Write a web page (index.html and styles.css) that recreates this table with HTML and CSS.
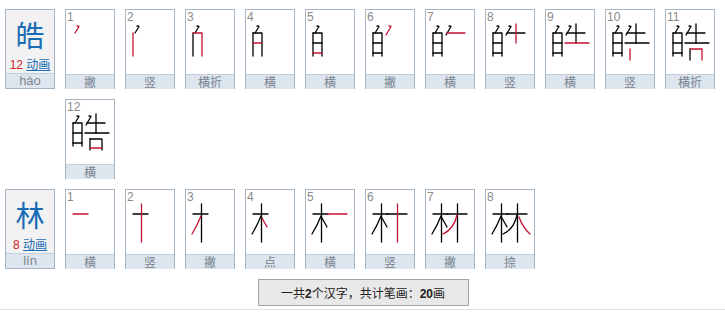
FILE: index.html
```html
<!DOCTYPE html>
<html lang="zh">
<head>
<meta charset="utf-8">
<link rel="stylesheet" href="styles.css">
</head>
<body>
<svg class="defs" width="0" height="0" aria-hidden="true">
  <defs>
    <!-- 皓 -->
    <g id="h1"><path d="M12,17 L14,17.5 L10,24"/></g>
    <g id="h2"><path d="M8,24 L8,47"/></g>
    <g id="h3"><path d="M8,24 L17,24 L17,47"/></g>
    <g id="h4"><path d="M8,34 L17,34"/></g>
    <g id="h5"><path d="M8,44 L17,44"/></g>
    <g id="h6"><path d="M24,17 L26,17.5 L21,26"/></g>
    <g id="h7"><path d="M22,24 L40,24"/></g>
    <g id="h8"><path d="M31,15 L31,34"/></g>
    <g id="h9"><path d="M20,34 L44,34"/></g>
    <g id="h10"><path d="M25,40 L25,51"/></g>
    <g id="h11"><path d="M25,40 L37,40 L37,51"/></g>
    <g id="h12"><path d="M25,49 L37,49"/></g>
    <!-- 林 -->
    <g id="l1"><path d="M8,25 L23,25"/></g>
    <g id="l2"><path d="M16.5,15 L16.5,53"/></g>
    <g id="l3"><path d="M16,27 Q12,37 7,45"/></g>
    <g id="l4"><path d="M17,29 L22,38"/></g>
    <g id="l5"><path d="M22,25 L42,25"/></g>
    <g id="l6"><path d="M32.5,15 L32.5,53"/></g>
    <g id="l7"><path d="M32,26 Q29,40 18,45"/></g>
    <g id="l8"><path d="M34,28 Q38,39 45,45"/></g>
  </defs>
</svg>

<div class="page">
  <div class="row">
    <div class="char-card">
      <div class="char-top">
        <div class="big">皓</div>
        <div class="meta"><span class="cnt">12</span> <a class="anim" href="#">动画</a></div>
      </div>
      <div class="label pinyin">hào</div>
    </div>
    <div class="strokes">
      <div class="card"><div class="pic"><span class="num">1</span><svg viewBox="1 1 48 64"><use href="#h1" class="r"/></svg></div><div class="label">撇</div></div>
      <div class="card"><div class="pic"><span class="num">2</span><svg viewBox="1 1 48 64"><use href="#h1" class="k"/><use href="#h2" class="r"/></svg></div><div class="label">竖</div></div>
      <div class="card"><div class="pic"><span class="num">3</span><svg viewBox="1 1 48 64"><use href="#h1" class="k"/><use href="#h2" class="k"/><use href="#h3" class="r"/></svg></div><div class="label">横折</div></div>
      <div class="card"><div class="pic"><span class="num">4</span><svg viewBox="1 1 48 64"><use href="#h1" class="k"/><use href="#h2" class="k"/><use href="#h3" class="k"/><use href="#h4" class="r"/></svg></div><div class="label">横</div></div>
      <div class="card"><div class="pic"><span class="num">5</span><svg viewBox="1 1 48 64"><use href="#h1" class="k"/><use href="#h2" class="k"/><use href="#h3" class="k"/><use href="#h4" class="k"/><use href="#h5" class="r"/></svg></div><div class="label">横</div></div>
      <div class="card"><div class="pic"><span class="num">6</span><svg viewBox="1 1 48 64"><use href="#h1" class="k"/><use href="#h2" class="k"/><use href="#h3" class="k"/><use href="#h4" class="k"/><use href="#h5" class="k"/><use href="#h6" class="r"/></svg></div><div class="label">撇</div></div>
      <div class="card"><div class="pic"><span class="num">7</span><svg viewBox="1 1 48 64"><use href="#h1" class="k"/><use href="#h2" class="k"/><use href="#h3" class="k"/><use href="#h4" class="k"/><use href="#h5" class="k"/><use href="#h6" class="k"/><use href="#h7" class="r"/></svg></div><div class="label">横</div></div>
      <div class="card"><div class="pic"><span class="num">8</span><svg viewBox="1 1 48 64"><use href="#h1" class="k"/><use href="#h2" class="k"/><use href="#h3" class="k"/><use href="#h4" class="k"/><use href="#h5" class="k"/><use href="#h6" class="k"/><use href="#h7" class="k"/><use href="#h8" class="r"/></svg></div><div class="label">竖</div></div>
      <div class="card"><div class="pic"><span class="num">9</span><svg viewBox="1 1 48 64"><use href="#h1" class="k"/><use href="#h2" class="k"/><use href="#h3" class="k"/><use href="#h4" class="k"/><use href="#h5" class="k"/><use href="#h6" class="k"/><use href="#h7" class="k"/><use href="#h8" class="k"/><use href="#h9" class="r"/></svg></div><div class="label">横</div></div>
      <div class="card"><div class="pic"><span class="num">10</span><svg viewBox="1 1 48 64"><use href="#h1" class="k"/><use href="#h2" class="k"/><use href="#h3" class="k"/><use href="#h4" class="k"/><use href="#h5" class="k"/><use href="#h6" class="k"/><use href="#h7" class="k"/><use href="#h8" class="k"/><use href="#h9" class="k"/><use href="#h10" class="r"/></svg></div><div class="label">竖</div></div>
      <div class="card"><div class="pic"><span class="num">11</span><svg viewBox="1 1 48 64"><use href="#h1" class="k"/><use href="#h2" class="k"/><use href="#h3" class="k"/><use href="#h4" class="k"/><use href="#h5" class="k"/><use href="#h6" class="k"/><use href="#h7" class="k"/><use href="#h8" class="k"/><use href="#h9" class="k"/><use href="#h10" class="k"/><use href="#h11" class="r"/></svg></div><div class="label">横折</div></div>
      <div class="card"><div class="pic"><span class="num">12</span><svg viewBox="1 1 48 64"><use href="#h1" class="k"/><use href="#h2" class="k"/><use href="#h3" class="k"/><use href="#h4" class="k"/><use href="#h5" class="k"/><use href="#h6" class="k"/><use href="#h7" class="k"/><use href="#h8" class="k"/><use href="#h9" class="k"/><use href="#h10" class="k"/><use href="#h11" class="k"/><use href="#h12" class="r"/></svg></div><div class="label">横</div></div>
    </div>
  </div>

  <div class="row">
    <div class="char-card">
      <div class="char-top">
        <div class="big">林</div>
        <div class="meta"><span class="cnt">8</span> <a class="anim" href="#">动画</a></div>
      </div>
      <div class="label pinyin">lín</div>
    </div>
    <div class="strokes">
      <div class="card"><div class="pic"><span class="num">1</span><svg viewBox="1 1 48 64"><use href="#l1" class="r"/></svg></div><div class="label">横</div></div>
      <div class="card"><div class="pic"><span class="num">2</span><svg viewBox="1 1 48 64"><use href="#l1" class="k"/><use href="#l2" class="r"/></svg></div><div class="label">竖</div></div>
      <div class="card"><div class="pic"><span class="num">3</span><svg viewBox="1 1 48 64"><use href="#l1" class="k"/><use href="#l2" class="k"/><use href="#l3" class="r"/></svg></div><div class="label">撇</div></div>
      <div class="card"><div class="pic"><span class="num">4</span><svg viewBox="1 1 48 64"><use href="#l1" class="k"/><use href="#l2" class="k"/><use href="#l3" class="k"/><use href="#l4" class="r"/></svg></div><div class="label">点</div></div>
      <div class="card"><div class="pic"><span class="num">5</span><svg viewBox="1 1 48 64"><use href="#l1" class="k"/><use href="#l2" class="k"/><use href="#l3" class="k"/><use href="#l4" class="k"/><use href="#l5" class="r"/></svg></div><div class="label">横</div></div>
      <div class="card"><div class="pic"><span class="num">6</span><svg viewBox="1 1 48 64"><use href="#l1" class="k"/><use href="#l2" class="k"/><use href="#l3" class="k"/><use href="#l4" class="k"/><use href="#l5" class="k"/><use href="#l6" class="r"/></svg></div><div class="label">竖</div></div>
      <div class="card"><div class="pic"><span class="num">7</span><svg viewBox="1 1 48 64"><use href="#l1" class="k"/><use href="#l2" class="k"/><use href="#l3" class="k"/><use href="#l4" class="k"/><use href="#l5" class="k"/><use href="#l6" class="k"/><use href="#l7" class="r"/></svg></div><div class="label">撇</div></div>
      <div class="card"><div class="pic"><span class="num">8</span><svg viewBox="1 1 48 64"><use href="#l1" class="k"/><use href="#l2" class="k"/><use href="#l3" class="k"/><use href="#l4" class="k"/><use href="#l5" class="k"/><use href="#l6" class="k"/><use href="#l7" class="k"/><use href="#l8" class="r"/></svg></div><div class="label">捺</div></div>
    </div>
  </div>

  <div class="summary-wrap">
    <div class="summary">一共<b>2</b>个汉字，共计笔画：<b>20</b>画</div>
  </div>
</div>
<div class="rule"></div>
</body>
</html>
```

FILE: styles.css
```css
html, body {
  margin: 0;
  padding: 0;
  background: #fff;
}
body {
  font-family: "Liberation Sans", "Noto Sans CJK SC", sans-serif;
  font-size: 12px;
  color: #333;
}
.defs {
  position: absolute;
  width: 0;
  height: 0;
}
.page {
  padding: 9px 0 0 5px;
  display: flex;
  flex-direction: column;
  gap: 10px;
}
.row {
  display: flex;
  gap: 10px;
  align-items: flex-start;
}
.strokes {
  display: flex;
  flex-wrap: wrap;
  gap: 10px;
  width: 660px;
}
.char-card, .card {
  width: 48px;
  height: 78px;
  border: 1px solid #a6b5c4;
  display: flex;
  flex-direction: column;
  flex: none;
}
.char-card { background: #f2f2f2; }
.card { background: #fff; }
.char-top {
  height: 64px;
  display: flex;
  flex-direction: column;
  align-items: center;
}
.big {
  font-family: "Noto Sans CJK SC", sans-serif;
  font-size: 29px;
  line-height: 32px;
  height: 32px;
  margin-top: 8px;
  color: #1a6cb5;
}
.meta {
  font-size: 12px;
  line-height: 14px;
  margin-top: 7px;
  white-space: nowrap;
  font-family: "Liberation Sans", "Noto Sans CJK SC", sans-serif;
}
.cnt { color: #d2232a; }
.anim {
  color: #1a6cb5;
  text-decoration: underline;
  font-family: "Noto Sans CJK SC", sans-serif;
}
.pic {
  position: relative;
  height: 64px;
}
.pic svg {
  display: block;
  width: 48px;
  height: 64px;
  fill: none;
  stroke-width: 1.3;
  stroke-linecap: round;
  stroke-linejoin: round;
}
.num {
  position: absolute;
  left: 1px;
  top: 0;
  font-family: "Liberation Sans", sans-serif;
  font-size: 12px;
  line-height: 14px;
  color: #8a8a8a;
}
.k { stroke: #000; }
.r { stroke: #c4122f; }
.label {
  height: 14px;
  border-top: 1px solid #c3ceda;
  background: #dde6ef;
  color: #7a8490;
  font-family: "Noto Sans CJK SC", sans-serif;
  font-size: 12px;
  line-height: 14px;
  text-align: center;
}
.pinyin {
  font-family: "Liberation Sans", sans-serif;
  font-size: 13px;
  color: #808890;
}
.summary-wrap {
  display: flex;
  justify-content: center;
}
.summary {
  width: 209px;
  height: 25px;
  border: 1px solid #a3a3a3;
  background: #e8e8e8;
  text-align: center;
  line-height: 25px;
  font-family: "Noto Sans CJK SC", sans-serif;
  font-size: 12px;
  color: #222;
  margin-right: 4px;
}
.summary b {
  font-family: "Liberation Sans", sans-serif;
  font-weight: bold;
}
.rule {
  margin-top: 3px;
  border-top: 1px solid #e2e2e2;
}
```
